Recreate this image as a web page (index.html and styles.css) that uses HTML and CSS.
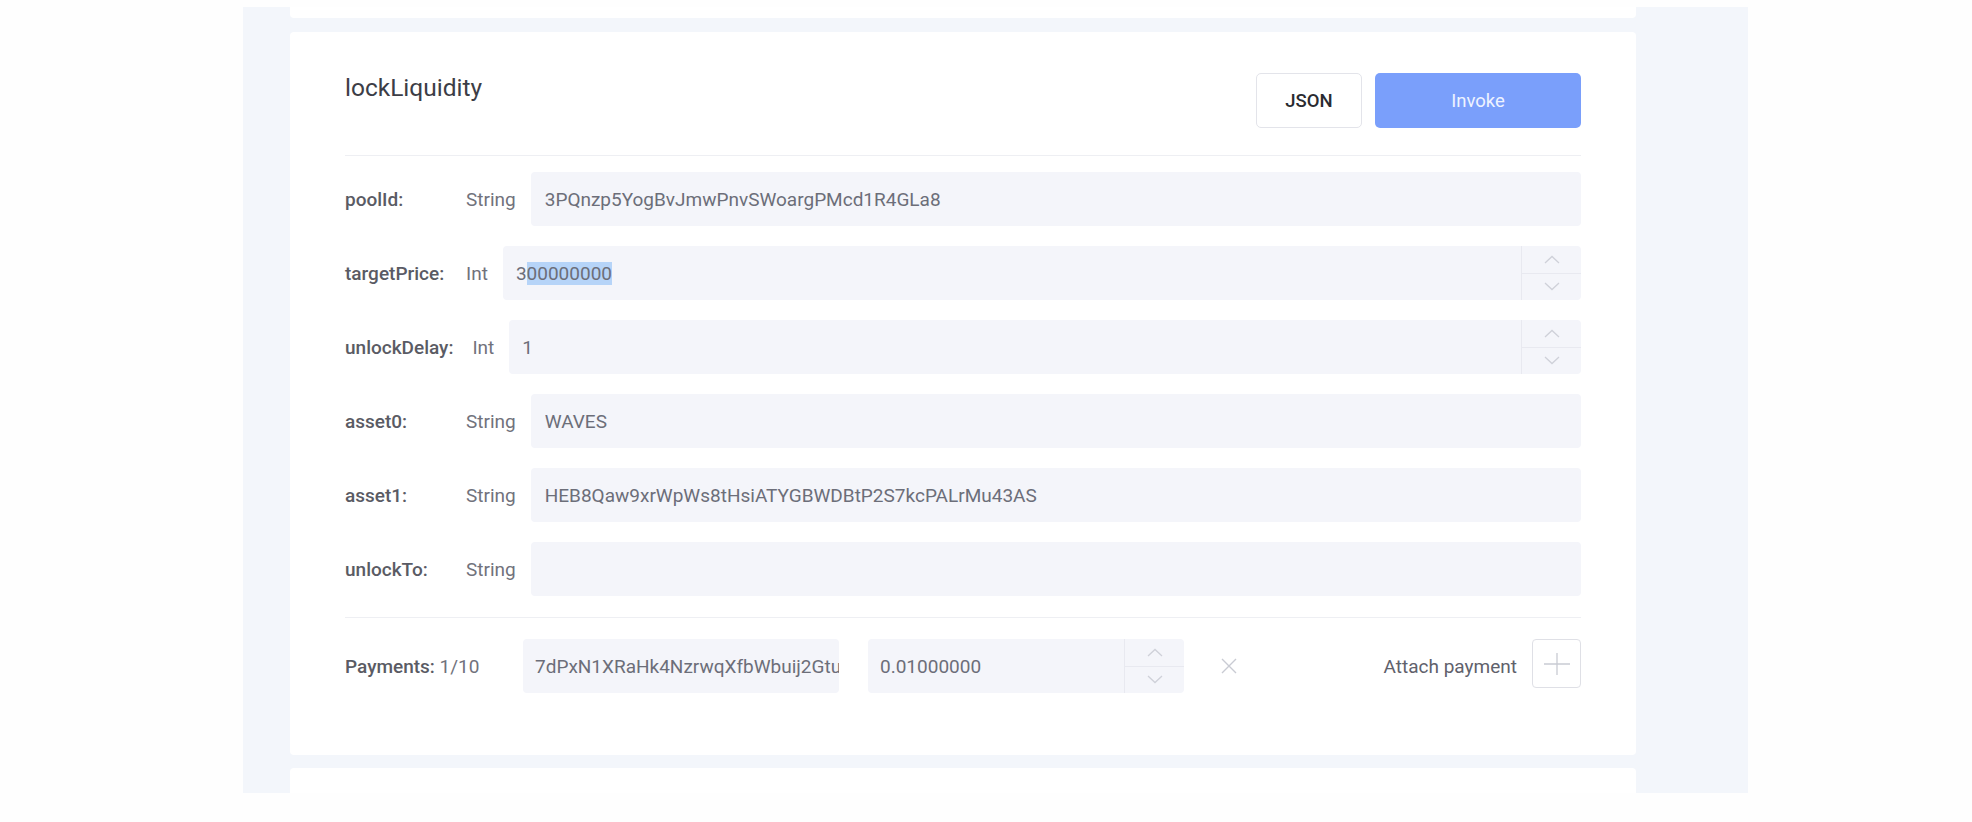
FILE: index.html
```html
<!DOCTYPE html>
<html>
<head>
<meta charset="utf-8">
<link rel="stylesheet" href="styles.css">
</head>
<body>
<div class="viewport">
  <div class="stack">
    <div class="card card-prev"></div>
    <div class="card card-main">
      <div class="head">
        <h2 class="title">lockLiquidity</h2>
        <div class="actions">
          <button class="btn btn-json">JSON</button>
          <button class="btn btn-invoke">Invoke</button>
        </div>
      </div>
      <div class="divider divider-head"></div>
      <div class="args">
        <div class="arg">
          <span class="arg-name">poolId:</span>
          <span class="arg-type">String</span>
          <div class="field"><span class="val">3PQnzp5YogBvJmwPnvSWoargPMcd1R4GLa8</span></div>
        </div>
        <div class="arg">
          <span class="arg-name">targetPrice:</span>
          <span class="arg-type">Int</span>
          <div class="field field-num">
            <span class="val">3<span class="sel">00000000</span></span>
            <div class="spin">
              <div class="spin-btn"><svg width="16" height="9" viewBox="0 0 16 9"><polyline points="1,8 8,1.5 15,8" fill="none" stroke="#cfd1d9" stroke-width="1.3"/></svg></div>
              <div class="spin-btn spin-down"><svg width="16" height="9" viewBox="0 0 16 9"><polyline points="1,1 8,7.5 15,1" fill="none" stroke="#cfd1d9" stroke-width="1.3"/></svg></div>
            </div>
          </div>
        </div>
        <div class="arg">
          <span class="arg-name">unlockDelay:</span>
          <span class="arg-type">Int</span>
          <div class="field field-num">
            <span class="val">1</span>
            <div class="spin">
              <div class="spin-btn"><svg width="16" height="9" viewBox="0 0 16 9"><polyline points="1,8 8,1.5 15,8" fill="none" stroke="#cfd1d9" stroke-width="1.3"/></svg></div>
              <div class="spin-btn spin-down"><svg width="16" height="9" viewBox="0 0 16 9"><polyline points="1,1 8,7.5 15,1" fill="none" stroke="#cfd1d9" stroke-width="1.3"/></svg></div>
            </div>
          </div>
        </div>
        <div class="arg">
          <span class="arg-name">asset0:</span>
          <span class="arg-type">String</span>
          <div class="field"><span class="val">WAVES</span></div>
        </div>
        <div class="arg">
          <span class="arg-name">asset1:</span>
          <span class="arg-type">String</span>
          <div class="field"><span class="val">HEB8Qaw9xrWpWs8tHsiATYGBWDBtP2S7kcPALrMu43AS</span></div>
        </div>
        <div class="arg">
          <span class="arg-name">unlockTo:</span>
          <span class="arg-type">String</span>
          <div class="field"><span class="val"></span></div>
        </div>
      </div>
      <div class="divider divider-pay"></div>
      <div class="payments">
        <div class="pay-label"><span class="pay-title">Payments:</span> 1/10</div>
        <div class="field field-asset"><span class="val">7dPxN1XRaHk4NzrwqXfbWbuij2Gtu</span></div>
        <div class="field field-num field-amount">
          <span class="val">0.01000000</span>
          <div class="spin">
            <div class="spin-btn"><svg width="16" height="9" viewBox="0 0 16 9"><polyline points="1,8 8,1.5 15,8" fill="none" stroke="#cfd1d9" stroke-width="1.3"/></svg></div>
            <div class="spin-btn spin-down"><svg width="16" height="9" viewBox="0 0 16 9"><polyline points="1,1 8,7.5 15,1" fill="none" stroke="#cfd1d9" stroke-width="1.3"/></svg></div>
          </div>
        </div>
        <div class="remove"><svg width="16" height="16" viewBox="0 0 16 16"><path d="M1 1L15 15M15 1L1 15" stroke="#c9cbd3" stroke-width="1.4" fill="none"/></svg></div>
        <div class="attach">
          <span class="attach-text">Attach payment</span>
          <button class="btn-plus"><svg width="28" height="24" viewBox="0 0 28 24"><path d="M1 12H27M14 1V23" stroke="#c9cbd3" stroke-width="1.3" fill="none"/></svg></button>
        </div>
      </div>
    </div>
    <div class="card card-next"></div>
  </div>
</div>
</body>
</html>
```

FILE: styles.css
```css
* { box-sizing: border-box; }

html, body {
  margin: 0;
  padding: 0;
  background: #fefefe;
  font-family: Roboto, "Liberation Sans", Arial, sans-serif;
}

.viewport {
  margin: 7px 0 0 243px;
  width: 1505px;
  height: 786px;
  background: #f3f6fb;
  overflow: hidden;
}

.stack {
  width: 1346px;
  margin-left: 47px;
  display: flex;
  flex-direction: column;
}

.card {
  background: #ffffff;
  border-radius: 4px;
}

.card-prev {
  height: 11px;
  border-radius: 0 0 4px 4px;
}

.card-main {
  margin-top: 14px;
  padding: 41px 55px 62px 55px;
}

.card-next {
  margin-top: 13px;
  height: 100px;
}

.head {
  display: flex;
  justify-content: space-between;
  align-items: flex-start;
}

.title {
  margin: 0;
  font-size: 24.5px;
  font-weight: 400;
  color: #3c3d46;
  line-height: 30px;
}

.actions {
  display: flex;
  gap: 13px;
}

.btn {
  height: 55px;
  border-radius: 5px;
  font-family: inherit;
  font-size: 18.5px;
  cursor: pointer;
}

.btn-json {
  width: 106px;
  background: #ffffff;
  border: 1px solid #e3e4ea;
  color: #2a2b31;
  font-weight: 500;
}

.btn-invoke {
  width: 206px;
  background: #7a9ffb;
  border: none;
  color: #eef3ff;
  font-weight: 400;
}

.divider {
  height: 1px;
  background: #eeeff3;
}

.divider-head { margin-top: 27px; }

.args {
  margin-top: 16px;
  display: flex;
  flex-direction: column;
  gap: 20px;
}

.arg {
  display: flex;
  align-items: center;
  height: 54px;
}

.arg-name {
  min-width: 102px;
  margin-right: 19px;
  font-size: 19px;
  font-weight: 500;
  color: #5a5b64;
}

.arg-type {
  margin-right: 15px;
  font-size: 19px;
  color: #71727c;
}

.field {
  flex: 1;
  height: 54px;
  background: #f4f5fa;
  border-radius: 4px;
  display: flex;
  align-items: center;
  padding-left: 14px;
  font-size: 19px;
  color: #6c6e79;
  white-space: nowrap;
  overflow: hidden;
}

.field-num { padding-left: 13px; }

.val { flex: 1; overflow: hidden; }

.sel { background: #b6d4f8; }

.spin {
  flex: none;
  width: 60px;
  height: 100%;
  border-left: 1px solid #e8e9f0;
  display: flex;
  flex-direction: column;
}

.spin-btn {
  flex: 1;
  display: flex;
  align-items: center;
  justify-content: center;
}

.spin-down { border-top: 1px solid #e8e9f0; }

.divider-pay { margin-top: 21px; }

.payments {
  margin-top: 21px;
  display: flex;
  align-items: center;
  height: 54px;
}

.pay-label {
  width: 178px;
  font-size: 19px;
  color: #71727c;
}

.pay-title {
  font-weight: 500;
  color: #5a5b64;
}

.field-asset {
  flex: none;
  width: 316px;
  padding-left: 12px;
}

.field-amount {
  flex: none;
  width: 316px;
  margin-left: 29px;
  padding-left: 12px;
}

.remove {
  margin-left: 37px;
  display: flex;
}

.attach {
  margin-left: auto;
  display: flex;
  align-items: center;
  gap: 15px;
}

.attach-text {
  font-size: 19px;
  color: #60616b;
}

.btn-plus {
  width: 49px;
  height: 49px;
  padding: 0;
  margin-top: -5px;
  background: #ffffff;
  border: 1px solid #dfe0e6;
  border-radius: 4px;
  display: flex;
  align-items: center;
  justify-content: center;
}
```
